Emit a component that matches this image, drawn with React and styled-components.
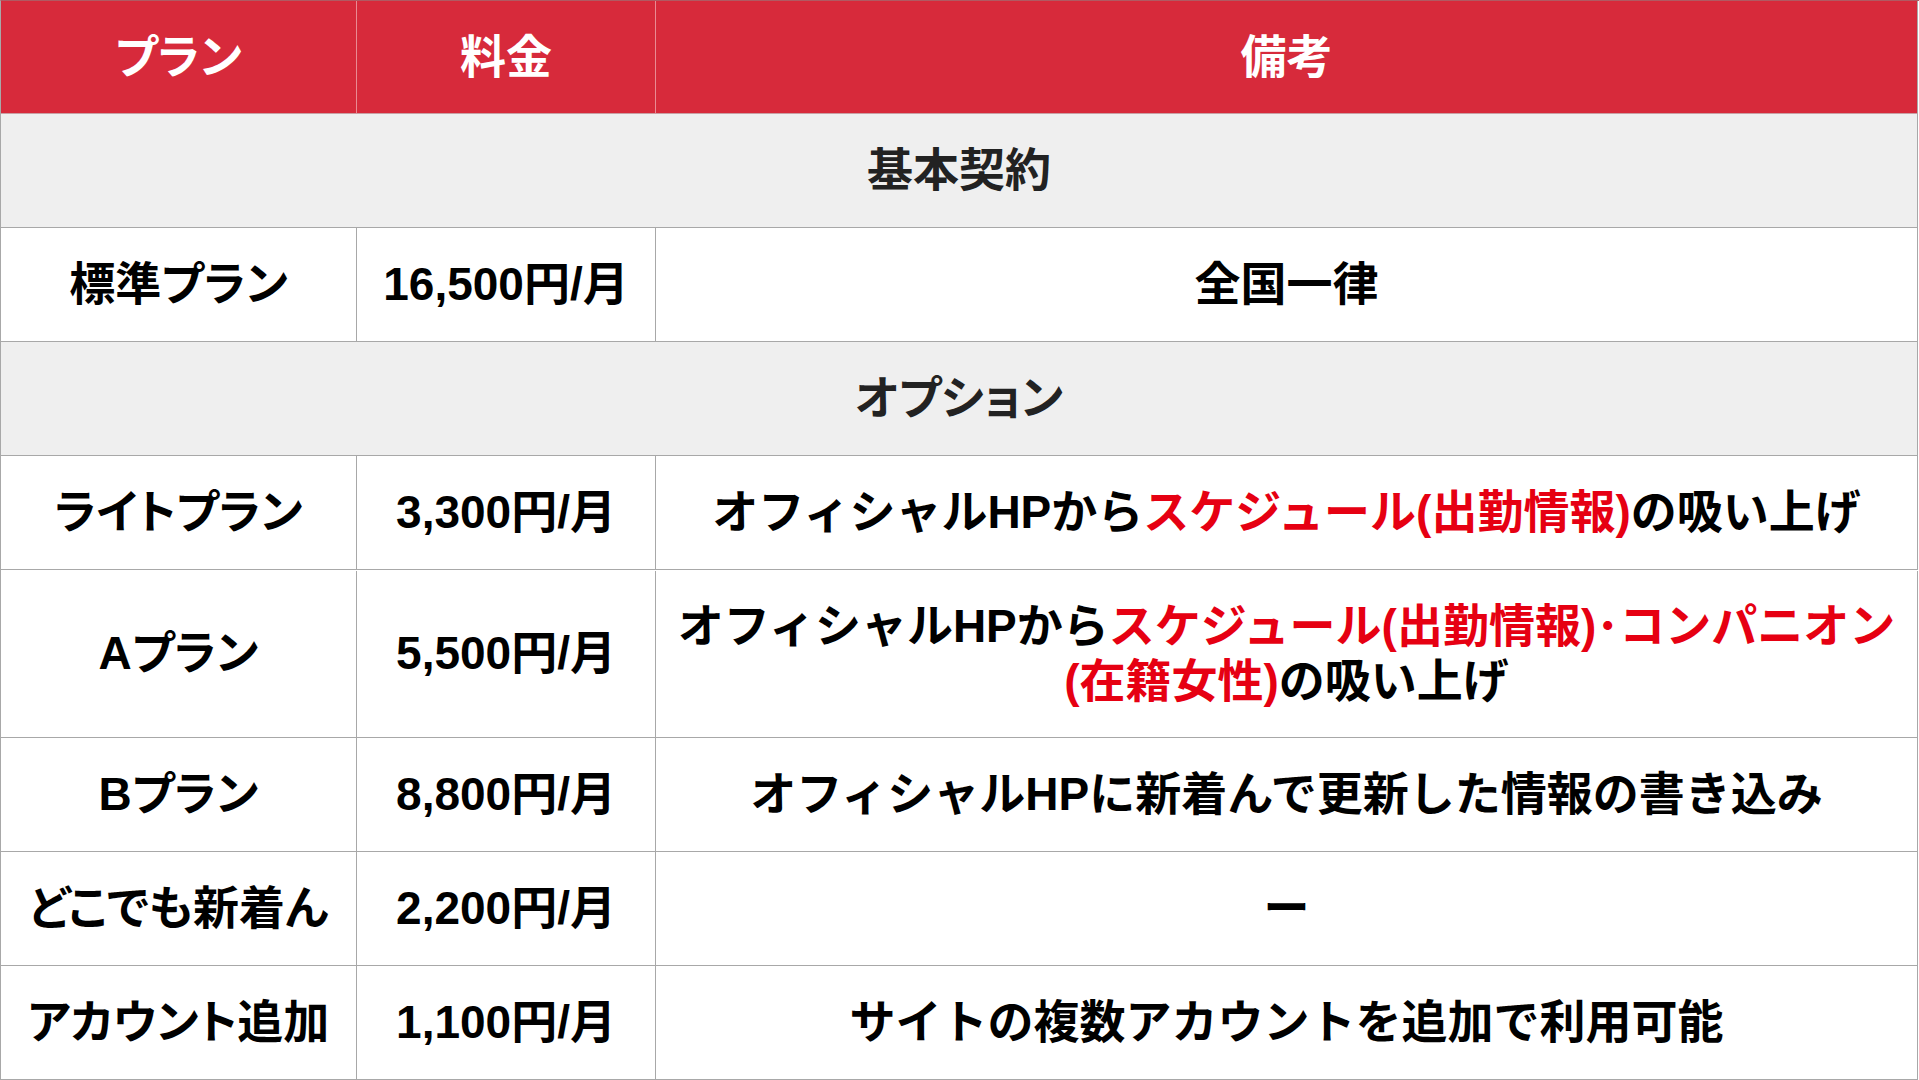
import React from "react";
import styled, { createGlobalStyle } from "styled-components";

const GlobalStyle = createGlobalStyle`
  html, body {
    margin: 0;
    padding: 0;
    background: #fff;
  }
  body {
    font-family: "Liberation Sans", "Noto Sans CJK JP", sans-serif;
  }
`;

const rows = [
  { type: "section", label: "基本契約" },
  { plan: "標準プラン", price: "16,500円/月", note: <>全国一律</> },
  { type: "section", label: "オプション" },
  {
    plan: "ライトプラン",
    price: "3,300円/月",
    note: (
      <>
        オフィシャルHPから<Accent>スケジュール(出勤情報)</Accent>の吸い上げ
      </>
    ),
  },
  {
    plan: "Aプラン",
    price: "5,500円/月",
    tall: true,
    note: (
      <>
        オフィシャルHPから<Accent>スケジュール(出勤情報)･コンパニオン</Accent>
        <br />
        <Accent>(在籍女性)</Accent>の吸い上げ
      </>
    ),
  },
  {
    plan: "Bプラン",
    price: "8,800円/月",
    note: <>オフィシャルHPに新着んで更新した情報の書き込み</>,
  },
  { plan: "どこでも新着ん", price: "2,200円/月", note: <>ー</> },
  {
    plan: "アカウント追加",
    price: "1,100円/月",
    note: <>サイトの複数アカウントを追加で利用可能</>,
  },
];

function Accent({ children }) {
  return <Red>{children}</Red>;
}

export default function App() {
  return (
    <>
      <GlobalStyle />
      <Table>
        <HeaderCell>プラン</HeaderCell>
        <HeaderCell>料金</HeaderCell>
        <HeaderCell last>備考</HeaderCell>
        {rows.map((row, i) =>
          row.type === "section" ? (
            <SectionCell key={i}>{row.label}</SectionCell>
          ) : (
            <React.Fragment key={i}>
              <PlanCell tall={row.tall}>{row.plan}</PlanCell>
              <Cell tall={row.tall}>{row.price}</Cell>
              <Cell tall={row.tall}>
                <Note>{row.note}</Note>
              </Cell>
            </React.Fragment>
          )
        )}
      </Table>
    </>
  );
}

const Table = styled.div`
  display: grid;
  grid-template-columns: 356px 299px 1262px;
  width: 1919px;
  height: 1080px;
  box-sizing: border-box;
  border-top: 1px solid #b05a62;
  border-left: 1px solid #a8a8a8;
  overflow: hidden;
`;

const BaseCell = styled.div`
  display: flex;
  align-items: center;
  justify-content: center;
  box-sizing: border-box;
  height: 114px;
  border-right: 1px solid #a8a8a8;
  border-bottom: 1px solid #a8a8a8;
  font-size: 46px;
  font-weight: 700;
  line-height: 55px;
  color: #000;
  white-space: nowrap;
  text-align: center;
`;

const HeaderCell = styled(BaseCell)`
  height: 113px;
  background: #d72a3b;
  color: #fff;
  font-feature-settings: "palt";
  border-right: 1px solid ${(p) => (p.last ? "#a8a8a8" : "#e98a93")};
  border-bottom: 1px solid #c9a0a4;
`;

const SectionCell = styled(BaseCell)`
  grid-column: 1 / -1;
  background: #efefef;
  color: #222;
  font-feature-settings: "palt";
`;

const Cell = styled(BaseCell)`
  height: ${(p) => (p.tall ? "167px" : "114px")};
  background: #fff;
`;

const PlanCell = styled(Cell)`
  font-feature-settings: "palt";
`;

const Note = styled.div`
  line-height: 55px;
`;

const Red = styled.span`
  color: #e60012;
`;
